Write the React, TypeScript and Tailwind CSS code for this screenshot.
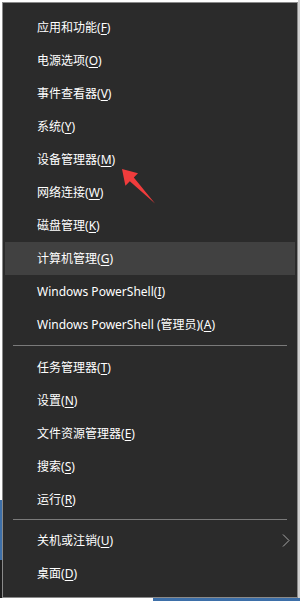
import React from "react";

type Item = { label: string; key: string; active?: boolean; sub?: boolean };

const groupA: Item[] = [
  { label: "应用和功能", key: "F" },
  { label: "电源选项", key: "O" },
  { label: "事件查看器", key: "V" },
  { label: "系统", key: "Y" },
  { label: "设备管理器", key: "M" },
  { label: "网络连接", key: "W" },
  { label: "磁盘管理", key: "K" },
  { label: "计算机管理", key: "G", active: true },
  { label: "Windows PowerShell", key: "I" },
  { label: "Windows PowerShell (管理员)", key: "A" },
];

const groupB: Item[] = [
  { label: "任务管理器", key: "T" },
  { label: "设置", key: "N" },
  { label: "文件资源管理器", key: "E" },
  { label: "搜索", key: "S" },
  { label: "运行", key: "R" },
];

const groupC: Item[] = [
  { label: "关机或注销", key: "U", sub: true },
  { label: "桌面", key: "D" },
];

function Row({ item }: { item: Item }) {
  return (
    <div
      className={`mx-[2px] flex h-[33px] items-center justify-between pl-[32px] pr-[5px] ${
        item.active ? "bg-[#414141]" : ""
      }`}
    >
      <span className="text-[12px] leading-none text-white">
        {item.label}(<span className="underline underline-offset-2">{item.key}</span>)
      </span>
      {item.sub && (
        <svg width="8" height="13" viewBox="0 0 8 13">
          <polyline points="1,0.5 7,6.5 1,12.5" fill="none" stroke="#a8a8a8" strokeWidth="1" />
        </svg>
      )}
    </div>
  );
}

export default function App() {
  return (
    <div
      className="relative h-[601px] w-[300px] overflow-hidden bg-white"
      style={{ fontFamily: '"Noto Sans", "Noto Sans CJK SC", sans-serif' }}
    >
      {/* desktop bits peeking out behind the menu */}
      <div className="absolute left-0 top-[500px] h-[60px] w-[2px] bg-[#3d6fa8]" />
      <div className="absolute left-0 top-[560px] h-[38px] w-[2px] bg-[#1e1e1e]" />
      <div className="absolute bottom-0 left-[153px] h-[3px] w-[147px] bg-[#3d6fa8]" />
      <div className="absolute right-0 top-0 h-[598px] w-[2px] bg-[#d0d0d0]" />

      <div className="relative ml-[2px] mt-[2px] h-[596px] w-[296px] border border-[#8a8a8a] bg-[#2b2b2b] pt-[8px]">
        {groupA.map((it) => (
          <Row key={it.key} item={it} />
        ))}
        <div className="pb-[5px] pt-[4px]">
          <div className="mx-[10px] h-px bg-[#7a7a7a]" />
        </div>
        {groupB.map((it) => (
          <Row key={it.key} item={it} />
        ))}
        <div className="pb-[4px] pt-[3px]">
          <div className="mx-[10px] h-px bg-[#7a7a7a]" />
        </div>
        {groupC.map((it) => (
          <Row key={it.key} item={it} />
        ))}
      </div>

      {/* red annotation arrow */}
      <svg className="pointer-events-none absolute left-0 top-0" width="300" height="601">
        <polygon
          points="122,169 138,173.2 133.8,177.5 155,203.5 129.8,181.3 125.4,185.8"
          fill="#f03c3c"
        />
      </svg>
    </div>
  );
}
